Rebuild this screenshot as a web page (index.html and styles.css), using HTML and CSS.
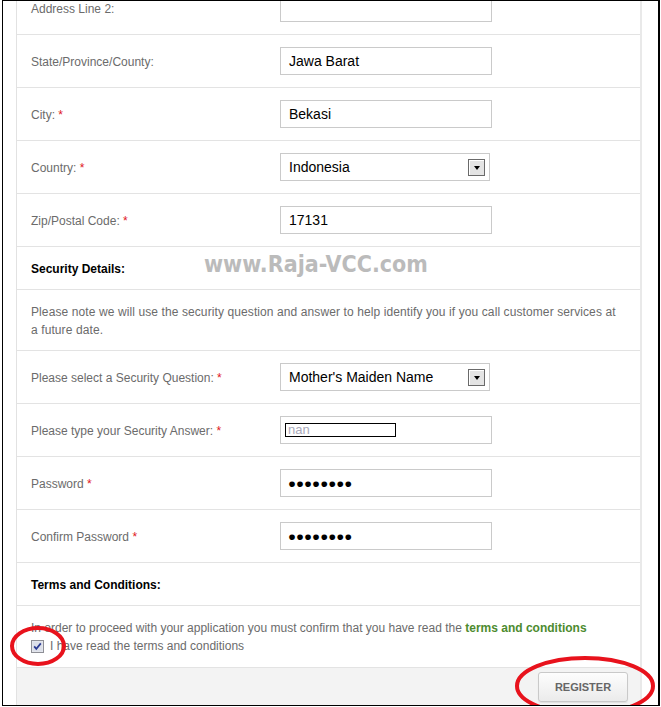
FILE: index.html
```html
<!DOCTYPE html>
<html>
<head>
<meta charset="utf-8">
<title>Register</title>
<link rel="stylesheet" href="styles.css">
</head>
<body>
<div class="frame">
  <div class="panel">
    <div class="row">
      <label class="label">Address Line 2:</label>
      <div class="field"></div>
    </div>
    <div class="row">
      <label class="label">State/Province/County:</label>
      <div class="field">Jawa Barat</div>
    </div>
    <div class="row">
      <label class="label">City: <span class="req">*</span></label>
      <div class="field">Bekasi</div>
    </div>
    <div class="row">
      <label class="label">Country: <span class="req">*</span></label>
      <div class="select"><span>Indonesia</span><span class="arrow"></span></div>
    </div>
    <div class="row">
      <label class="label">Zip/Postal Code: <span class="req">*</span></label>
      <div class="field">17131</div>
    </div>
    <div class="row heading">
      <h3>Security Details:</h3>
      <span class="watermark">www.Raja-VCC.com</span>
    </div>
    <div class="row note">
      <p>Please note we will use the security question and answer to help identify you if you call customer services at a future date.</p>
    </div>
    <div class="row">
      <label class="label">Please select a Security Question: <span class="req">*</span></label>
      <div class="select"><span>Mother's Maiden Name</span><span class="arrow"></span></div>
    </div>
    <div class="row">
      <label class="label">Please type your Security Answer: <span class="req">*</span></label>
      <div class="field answer"><span class="autofill">nan</span></div>
    </div>
    <div class="row">
      <label class="label">Password <span class="req">*</span></label>
      <div class="field pass">●●●●●●●●</div>
    </div>
    <div class="row">
      <label class="label">Confirm Password <span class="req">*</span></label>
      <div class="field pass">●●●●●●●●</div>
    </div>
    <div class="row heading">
      <h3>Terms and Conditions:</h3>
    </div>
    <div class="row terms">
      <p>In order to proceed with your application you must confirm that you have read the <a class="tc">terms and conditions</a></p>
      <div class="agree">
        <svg class="check" width="13" height="13" viewBox="0 0 13 13">
          <rect x="0.5" y="0.5" width="12" height="12" fill="#e9eaef" stroke="#8e8f96"/>
          <rect x="1.5" y="1.5" width="10" height="10" fill="#dcdfe9"/>
          <path d="M3.2 6.4 L5.3 8.9 L9.8 3.4" fill="none" stroke="#2a3a92" stroke-width="1.7"/>
        </svg>
        <span>I have read the terms and conditions</span>
      </div>
    </div>
    <div class="footer">
      <button class="register" type="button">REGISTER</button>
    </div>
  </div>
  <svg class="marks" width="661" height="707" viewBox="0 0 661 707">
    <ellipse cx="38" cy="646" rx="26" ry="18" fill="none" stroke="#e8121c" stroke-width="4"/>
    <ellipse cx="585" cy="686" rx="68" ry="28" fill="none" stroke="#e8121c" stroke-width="4"/>
  </svg>
</div>
</body>
</html>
```
FILE: styles.css
```css
* { box-sizing: border-box; }
html, body { margin: 0; padding: 0; background: #fff; }
body {
  font-family: "Liberation Sans", Arial, sans-serif;
  font-size: 12px;
  color: #6b6b6b;
}
.frame {
  position: relative;
  margin-left: 2px;
  width: 658px;
  height: 706px;
  border: 1px solid #000;
  border-right-width: 2px;
  padding-left: 13px;
  overflow: hidden;
  background: #fff;
}
.panel {
  width: 626px;
  margin-top: -19px;
  border-left: 1px solid #e2e2e2;
  border-right: 2px solid #e9e9e9;
}
.row {
  position: relative;
  display: grid;
  grid-template-columns: 249px 212px;
  align-items: center;
  height: 53px;
  padding-left: 14px;
  border-bottom: 1px solid #e3e3e3;
}
.label { color: #6b6b6b; margin-top: 2px; }
.req { color: #e0161c; }
.field {
  display: flex;
  align-items: center;
  width: 212px;
  height: 28px;
  border: 1px solid #cacaca;
  padding: 0 8px;
  font-size: 14px;
  color: #000;
  background: #fff;
}
.field.answer { padding-left: 4px; }
.autofill {
  display: block;
  width: 111px;
  height: 14px;
  border: 1px solid #000;
  padding-left: 2px;
  font-size: 13px;
  line-height: 11px;
  color: #a9a9ba;
}
.field.pass {
  font-size: 13.3px;
  padding-left: 7px;
  letter-spacing: 0;
}
.select {
  display: flex;
  align-items: center;
  justify-content: space-between;
  width: 210px;
  height: 28px;
  border: 1px solid #cacaca;
  padding: 0 4px 0 8px;
  font-size: 14px;
  color: #000;
  background: #fff;
}
.arrow {
  display: flex;
  align-items: center;
  justify-content: center;
  width: 17px;
  height: 17px;
  border: 1px solid #6a6a6a;
  background: #e4e4e4;
  box-shadow: inset 1px 1px 0 #fff;
}
.arrow::after {
  content: "";
  border-top: 4px solid #000;
  border-left: 3.5px solid transparent;
  border-right: 3.5px solid transparent;
  margin-top: 1px;
}
.heading {
  display: block;
  height: 43px;
  padding-top: 15px;
}
.heading h3 {
  margin: 0;
  font-size: 12px;
  line-height: 14px;
  font-weight: bold;
  color: #000;
}
.watermark {
  position: absolute;
  left: 187px;
  top: 6px;
  font-family: "DejaVu Sans Condensed", "DejaVu Sans", sans-serif;
  font-stretch: condensed;
  font-weight: bold;
  font-size: 23px;
  line-height: 1;
  color: #bbbbbb;
  white-space: nowrap;
}
.note {
  display: block;
  height: 61px;
  padding: 13px 18px 0 14px;
}
.note p {
  margin: 0;
  line-height: 18px;
  letter-spacing: 0.1px;
}
.terms p {
  margin: 0;
  line-height: 18px;
}
.terms {
  display: block;
  height: 62px;
  padding: 13px 14px 0 14px;
  line-height: 18px;
}
.tc {
  font-weight: bold;
  color: #4d8b2f;
  text-decoration: none;
}
.agree {
  display: flex;
  align-items: center;
  gap: 6px;
  height: 18px;
}
.check { display: block; flex: none; }
.footer {
  display: flex;
  justify-content: flex-end;
  height: 60px;
  padding: 4px 12px 0 0;
  background: #f3f3f3;
}
.register {
  width: 90px;
  height: 30px;
  border: 1px solid #c9c9c9;
  border-radius: 3px;
  background: linear-gradient(#fdfdfd, #ebebeb);
  box-shadow: 0 1px 1px rgba(0, 0, 0, 0.08);
  font-family: "Liberation Sans", Arial, sans-serif;
  font-weight: bold;
  font-size: 11px;
  color: #666;
  padding: 0;
}
.marks {
  position: absolute;
  left: -3px;
  top: -1px;
  pointer-events: none;
}
```
